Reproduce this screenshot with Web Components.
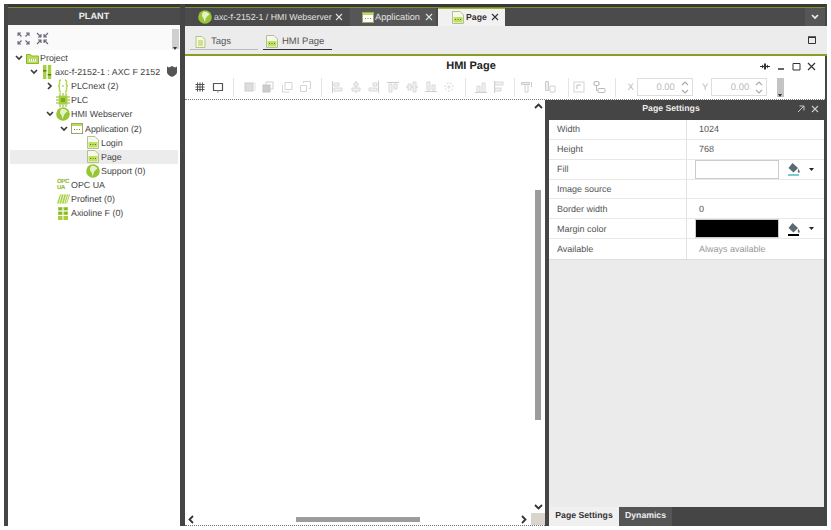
<!DOCTYPE html>
<html>
<head>
<meta charset="utf-8">
<style>
  html, body { margin: 0; height: 100%; background: #fff; }
  body { padding: 4px 4px 4px 4px; box-sizing: border-box; height: 530px; overflow: hidden; font-family: "Liberation Sans", Arial, sans-serif; text-rendering: geometricPrecision; }
</style>
</head>
<body>
<hmi-app>
  <plant-panel slot="plant">
    <tree-row indent="4" toggle="open" icon="project" label="Project"></tree-row>
    <tree-row indent="19" toggle="open" icon="device" label="axc-f-2152-1 : AXC F 2152" shield></tree-row>
    <tree-row indent="35" toggle="closed" icon="braces" label="PLCnext (2)"></tree-row>
    <tree-row indent="35" icon="chip" label="PLC"></tree-row>
    <tree-row indent="35" toggle="open" icon="globe" label="HMI Webserver"></tree-row>
    <tree-row indent="49" toggle="open" icon="app" label="Application (2)"></tree-row>
    <tree-row indent="65" icon="page" label="Login"></tree-row>
    <tree-row indent="65" icon="page" label="Page" selected></tree-row>
    <tree-row indent="65" icon="globe" label="Support (0)"></tree-row>
    <tree-row indent="35" icon="opc" label="OPC UA"></tree-row>
    <tree-row indent="35" icon="profinet" label="Profinet (0)"></tree-row>
    <tree-row indent="35" icon="axio" label="Axioline F (0)"></tree-row>
  </plant-panel>
  <editor-area slot="editor">
    <settings-dock>
      <setting-row label="Width" value="1024"></setting-row>
      <setting-row label="Height" value="768"></setting-row>
      <setting-row label="Fill" swatch="#ffffff"></setting-row>
      <setting-row label="Image source"></setting-row>
      <setting-row label="Border width" value="0"></setting-row>
      <setting-row label="Margin color" swatch="#000000"></setting-row>
      <setting-row label="Available" value="Always available" muted></setting-row>
    </settings-dock>
  </editor-area>
</hmi-app>

<script>
  const ICONS = {
    project: `<svg width="13" height="11" viewBox="0 0 13 11"><path d="M0.5 1.5h4l1 1.5h7v7.5h-12z" fill="#b7dc55" stroke="#8fb62e"/><path d="M3 6h7v2.5H3z" fill="#fff"/><path d="M4 7h1M6 7h1M8 7h1" stroke="#6d8f1e"/></svg>`,
    device: `<svg width="10" height="14" viewBox="0 0 10 14"><rect x="1" y="0" width="3.4" height="14" fill="#a5cf3c"/><rect x="5.8" y="0" width="3.4" height="14" fill="#a5cf3c"/><rect x="1" y="5" width="3.4" height="1.5" fill="#5d7a18"/><rect x="5.8" y="9" width="3.4" height="1.5" fill="#5d7a18"/></svg>`,
    braces: `<svg width="12" height="14" viewBox="0 0 12 14" fill="none" stroke="#b5d84f" stroke-width="1.5"><path d="M4 1C2 1 2.5 3 2.5 5S1 7 1 7s1.500 0 1.500 2-.5 4 1.500 4M8 1c2 0 1.500 2 1.500 4S11 7 11 7s-1.500 0-1.500 2 .5 4-1.500 4"/><path d="M5.500 7h1" stroke="#7f9c2a"/></svg>`,
    chip: `<svg width="14" height="14" viewBox="0 0 14 14"><rect x="2.500" y="2.500" width="9" height="9" fill="#a5cf3c"/><rect x="5" y="5" width="4" height="4" fill="#7fa526"/><path d="M0 4h2.500M11.500 4H14M0 7h2.500M11.500 7H14M0 10h2.500M11.500 10H14M4 0v2.500M4 11.500V14M7 0v2.500M7 11.500V14M10 0v2.500M10 11.500V14" stroke="#8db52e"/></svg>`,
    globe: `<svg width="14" height="14" viewBox="0 0 14 14"><circle cx="7" cy="7" r="6.800" fill="#96c535"/><path d="M5 2C8 1 11 3 11.500 5 9.500 5 9 7 8 8 7.500 9 7.500 11 6.500 12 6 10 6 8 4.500 7 3.500 6 4 4 5 2z" fill="#e6f1c6"/></svg>`,
    app: `<svg width="12" height="11" viewBox="0 0 12 11"><rect x="0.500" y="0.500" width="11" height="10" fill="#fff" stroke="#9aa86a"/><rect x="1" y="1" width="10" height="2" fill="#b7dc55"/><path d="M3 6.500h1M5.500 6.500h1M8 6.500h1" stroke="#6d8f1e"/></svg>`,
    page: `<svg width="12" height="13" viewBox="0 0 12 13"><path d="M.5 .5h7.500l3.500 3.500v8.500H.5z" fill="#f6f8ea" stroke="#b4bf95"/><rect x="1.500" y="6" width="9" height="5.500" fill="#bfe060"/><path d="M3 8.500h1M5.500 8.500h1M8 8.500h1" stroke="#5d7a18"/></svg>`,
    profinet: `<svg width="13" height="10" viewBox="0 0 13 10"><path d="M3 .5h10L10 9.500H0z" fill="#a5cf3c"/><path d="M4.500 .5 2 9.500M7 .5 4.500 9.500M9.500 .5 7 9.500M11.500 .5 9 9.500" stroke="#fff" stroke-width=".8"/></svg>`,
    axio: `<svg width="12" height="13" viewBox="0 0 12 13"><path d="M1 0h4.500v13H1zM6.500 0H11v13H6.500z" fill="#a5cf3c"/><path d="M1 4h10M1 8.500h10" stroke="#fff"/><path d="M2 2h2.500M7.500 2H10M2 6h2.500M7.500 6H10" stroke="#6d8f1e"/></svg>`
  };

  const TOOL_PATHS = {
    grid: `<path d="M4.500 2.500v9M7 2.500v9M9.500 2.500v9M2.500 4.500h9M2.500 7h9M2.500 9.500h9" stroke="#555"/>`,
    frame: `<path d="M2.500 3.500h9v7h-9z" stroke="#555" stroke-width="1.200"/><path d="M7 10.500V13" stroke="#999"/>`,
    front: `<rect x="3" y="3" width="8" height="8" fill="#ddd" stroke="#ccc"/><path d="M11 3h2v8" stroke="#e3e3e3"/>`,
    back: `<rect x="2" y="5" width="7" height="7" fill="#ccc" stroke="#c4c4c4"/><path d="M5 5V2h7v7H9" stroke="#d0d0d0"/>`,
    fwd: `<path d="M5 2.500h7v7H5z" stroke="#d4d4d4"/><path d="M2.500 5v7h7" stroke="#d4d4d4"/>`,
    bwd: `<path d="M2.500 5.500h6v6h-6z" stroke="#d4d4d4"/><path d="M5.500 3V1.500h7v7H11" stroke="#d4d4d4"/>`,
    alignL: `<path d="M2.500 1v12" stroke="#ccc"/><path d="M4 3h5v3H4zM4 8h8v3H4z" fill="#f2f2f2" stroke="#d8d8d8"/>`,
    alignC: `<path d="M7 1v12" stroke="#ccc"/><path d="M5 3h4v3H5zM3 8h8v3H3z" fill="#f2f2f2" stroke="#d8d8d8"/>`,
    alignR: `<path d="M11.500 1v12" stroke="#ccc"/><path d="M6 3h4v3H6zM2 8h8v3H2z" fill="#f2f2f2" stroke="#d8d8d8"/>`,
    alignT: `<path d="M1 2.500h12" stroke="#ccc"/><path d="M3 4h3v8H3zM8 4h3v5H8z" fill="#f2f2f2" stroke="#d8d8d8"/>`,
    alignM: `<path d="M1 7h12" stroke="#ccc"/><path d="M3 4h3v6H3zM8 2h3v10H8z" fill="#f2f2f2" stroke="#d8d8d8"/>`,
    alignB: `<path d="M1 11.500h12" stroke="#ccc"/><path d="M3 2h3v8H3zM8 5h3v5H8z" fill="#f2f2f2" stroke="#d8d8d8"/>`,
    ring: `<path d="M3 7a4 4 0 0 1 8 0 4 4 0 0 1-8 0" stroke="#d4d4d4" stroke-dasharray="2 1.500"/><path d="M7 5v4M5 7h4" stroke="#ddd"/>`,
    distH: `<path d="M1 12.500h12" stroke="#ccc"/><path d="M3 6h3v6H3zM8 3h3v9H8z" fill="#f2f2f2" stroke="#d8d8d8"/>`,
    distV: `<path d="M2.500 1v12" stroke="#ccc"/><path d="M3 2h8v3H3zM3 8h6v3H3z" fill="#f2f2f2" stroke="#d8d8d8"/>`,
    sizeW: `<path d="M1.500 2.500h8v2h-8z" fill="#eee" stroke="#ccc"/><path d="M5 5v7h3V5" stroke="#d0d0d0"/><path d="M11.500 2v5" stroke="#ccc"/>`,
    sizeH: `<path d="M2.500 1.500h3v9h-3z" fill="#eee" stroke="#ccc"/><path d="M7 6h5v6H7z" stroke="#d0d0d0"/>`,
    corner: `<rect x="2" y="2" width="10" height="10" stroke="#d4d4d4"/><path d="M5 9V5h4" stroke="#bbb"/>`,
    link: `<rect x="2" y="1.500" width="5" height="4" rx="1.500" stroke="#aaa"/><rect x="6" y="8.500" width="7" height="4" rx="1" stroke="#bbb"/><path d="M4.500 5.500v5H6" stroke="#bbb"/>`
  };

  class HmiApp extends HTMLElement {
    constructor() {
      super();
      this.attachShadow({ mode: 'open' });
      this.shadowRoot.innerHTML = `
        <style>
          :host { display: grid; grid-template-columns: 172px 1fr; column-gap: 5px; width: 823px; height: 522px; padding-left: 4px; box-sizing: border-box; background: #454545; }
        </style>
        <slot name="plant"></slot>
        <slot name="editor"></slot>`;
    }
  }
  customElements.define('hmi-app', HmiApp);

  class PlantPanel extends HTMLElement {
    constructor() {
      super();
      this.attachShadow({ mode: 'open' });
      this.shadowRoot.innerHTML = `
        <style>
          :host { display: flex; flex-direction: column; background: #fff; min-height: 0; }
          .head { height: 21px; box-sizing: border-box; border-top: 3px solid #383838; background: #4b4b4b; color: #eee; font-size: 9.200px; font-weight: bold; text-align: center; line-height: 18px; box-shadow: inset 0 1px 0 #7f8f2a; }
          .tools { height: 25px; box-sizing: border-box; padding: 2px 0 0 9px; flex: none; display: flex; align-items: center; gap: 6px; background: #fafafa; }
          .bar { margin-left: auto; width: 7px; height: 20px; background: #cfcfcf; margin-right: 1px; position: relative; }
          .bar::after { content: ""; position: absolute; left: 1px; bottom: -1px; border: 2.500px solid transparent; border-top: 3px solid #333; border-bottom: 0; }
          .tree { padding: 1px 2px 0 2px; display: flex; flex-direction: column; }
        </style>
        <div class="head">PLANT</div>
        <div class="tools">
          <svg width="13" height="13" viewBox="0 0 13 13" fill="none" stroke="#667" stroke-width="1.100"><path d="M1 4V1h3M12 4V1H9M1 9v3h3M12 9v3H9M1.500 1.500l3 3M11.500 1.500l-3 3M1.500 11.500l3-3M11.500 11.500l-3-3"/></svg>
          <svg width="13" height="13" viewBox="0 0 13 13" fill="none" stroke="#667" stroke-width="1.100"><path d="M5 2v3H2M8 2v3h3M5 11V8H2M8 11V8h3M1 1l4 4M12 1 8 5M1 12l4-4M12 12 8 8"/></svg>
          <div class="bar"></div>
        </div>
        <div class="tree"><slot></slot></div>`;
    }
  }
  customElements.define('plant-panel', PlantPanel);

  class TreeRow extends HTMLElement {
    constructor() {
      super();
      this.attachShadow({ mode: 'open' });
    }
    connectedCallback() {
      const toggle = this.getAttribute('toggle');
      const icon = this.getAttribute('icon');
      const chevron = toggle === 'open'
        ? `<svg width="8" height="6" viewBox="0 0 8 6"><path d="M1 1l3 3 3-3" fill="none" stroke="#3c3c3c" stroke-width="1.700"/></svg>`
        : toggle === 'closed'
          ? `<svg width="6" height="8" viewBox="0 0 6 8"><path d="M1 1l3 3-3 3" fill="none" stroke="#3c3c3c" stroke-width="1.700"/></svg>`
          : '';
      const iconMarkup = icon === 'opc' ? `<span class="opc">OPC<br>UA</span>` : ICONS[icon];
      const shield = this.hasAttribute('shield')
        ? `<svg class="shield" width="10" height="12" viewBox="0 0 10 12"><path d="M0 1.500 2 2.500 5 1l3 1.500 2-1V7c0 2.500-3 4-5 5-2-1-5-2.500-5-5z" fill="#555"/></svg>`
        : '';
      this.shadowRoot.innerHTML = `
        <style>
          :host { display: flex; align-items: center; height: 14.1px; font-size: 8.900px; color: #444; white-space: nowrap; position: relative; }
          :host([selected]) { background: #ececec; }
          .tog { width: 10px; display: flex; justify-content: center; flex: none; }
          .ico { width: 16px; display: flex; justify-content: center; align-items: center; flex: none; height: 14px; }
          .ico svg { flex: none; }
          .opc { color: #8ab42a; font-size: 6px; font-weight: bold; line-height: 6px; letter-spacing: -.3px; text-align: left; }
          .shield { position: absolute; left: 157px; top: 0; }
        </style>
        <span class="tog" style="margin-left:${this.getAttribute('indent')}px">${chevron}</span>
        <span class="ico">${iconMarkup}</span>
        <span>${this.getAttribute('label')}</span>${shield}`;
    }
  }
  customElements.define('tree-row', TreeRow);

  class DocTab extends HTMLElement {
    constructor() {
      super();
      this.attachShadow({ mode: 'open' });
    }
    connectedCallback() {
      this.shadowRoot.innerHTML = `
        <style>
          :host { display: flex; align-items: center; box-sizing: border-box; height: 18px; font-size: 9.200px; color: #e2e2e2; gap: 1px; white-space: nowrap; background: #4f4f4f; }
          :host([long]) { font-size: 8.800px; gap: 2px; }
          :host([active]) { background: #f1f1f1; color: #333; font-weight: bold; box-shadow: inset 0 1px 0 #9ab52f; font-size: 8.700px; gap: 2px; }
          .x { margin-left: auto; width: 8px; height: 8px; }
          svg { flex: none; }
        </style>
        <slot></slot>
        <svg class="x" viewBox="0 0 8 8"><path d="M1 1l6 6M7 1 1 7" stroke="currentColor" stroke-width="1.100"/></svg>`;
    }
  }
  customElements.define('doc-tab', DocTab);

  class SubTab extends HTMLElement {
    constructor() {
      super();
      this.attachShadow({ mode: 'open' });
      this.shadowRoot.innerHTML = `
        <style>
          :host { display: flex; align-items: center; gap: 5px; box-sizing: border-box; height: 24px; padding: 9px 0 1px 5px; border-bottom: 1px solid #bbb; font-size: 9.500px; color: #555; }
          :host([active]) { border-bottom-color: #333; gap: 4px; padding-left: 3px; }
        </style>
        <slot></slot>`;
    }
  }
  customElements.define('sub-tab', SubTab);

  class ToolStrip extends HTMLElement {
    constructor() {
      super();
      this.attachShadow({ mode: 'open' });
    }
    connectedCallback() {
      // names, slot width, pull towards the previous separator
      const groups = [
        [['grid', 'frame'], 18, 0],
        [['front', 'back', 'fwd', 'bwd'], 18.7, 0],
        [['alignL', 'alignC', 'alignR', 'alignT', 'alignM', 'alignB', 'ring'], 18.7, 0],
        [['distH', 'distV'], 18, 0],
        [['sizeW', 'sizeH'], 23, -5],
        [['corner', 'link'], 20, -6]
      ];
      const html = groups.map(([names, w, pull]) => {
        const icons = names.map((n, i) => `<span class="t" style="width:${w}px;margin-left:${i ? 0 : pull}px"><svg width="14" height="14" viewBox="0 0 14 14" fill="none">${TOOL_PATHS[n]}</svg></span>`).join('');
        return icons + `<i class="sep"></i>`;
      }).join('');
      const spin = `<svg width="8" height="15" viewBox="0 0 8 15" fill="none" stroke="#aaa" stroke-width="1.200"><path d="M1 5l3-3 3 3M1 10l3 3 3-3"/></svg>`;
      this.shadowRoot.innerHTML = `
        <style>
          :host { display: flex; align-items: center; height: 25px; box-sizing: border-box; padding-left: 6px; background: #fff; font-size: 9.500px; color: #bbb; border-bottom: 1px dotted #777; }
          .t { display: flex; justify-content: center; flex: none; }
          .sep { width: 1px; height: 19px; background: #e4e4e4; margin: 0 6px; flex: none; }
          .lab { margin: 0 3px 0 9px; }
          .lab.first { margin-left: 6px; }
          .num { width: 56px; height: 18px; box-sizing: border-box; border: 1px solid #ddd; display: flex; align-items: center; justify-content: flex-end; gap: 6px; padding-right: 3px; color: #bbb; }
          .bar { width: 7px; height: 19px; background: #c4c4c4; margin-left: 10px; position: relative; }
          .bar::after { content: ""; position: absolute; left: 1px; bottom: 0; border: 2.500px solid transparent; border-top: 3px solid #333; border-bottom: 0; }
        </style>
        ${html}
        <span class="lab first">X</span><span class="num">0.00 ${spin}</span>
        <span class="lab">Y</span><span class="num">0.00 ${spin}</span>
        <span class="bar"></span>`;
    }
  }
  customElements.define('tool-strip', ToolStrip);

  class EditorArea extends HTMLElement {
    constructor() {
      super();
      this.attachShadow({ mode: 'open' });
      const webIcon = ICONS.globe, appIcon = ICONS.app, pageIcon = ICONS.page;
      this.shadowRoot.innerHTML = `
        <style>
          :host { display: flex; flex-direction: column; min-height: 0; padding-right: 2px; background: #454545; }
          .tabs { height: 22px; flex: none; box-sizing: border-box; border-top: 3px solid #383838; background: #4b4b4b; display: flex; gap: 2px; box-shadow: inset 0 1px 0 #7f8f2a; padding-top: 1px; }
          .tabs doc-tab:nth-child(1) { width: 163px; background: #4b4b4b; padding: 0 5px 0 13px; }
          .tabs doc-tab:nth-child(2) { width: 86px; background: #565656; padding: 0 3px 0 12px; }
          .tabs doc-tab:nth-child(3) { width: 67px; padding: 0 6px 0 14px; }
          .more { margin-left: auto; width: 20px; background: #565656; display: flex; align-items: center; justify-content: center; }
          .subs { height: 30px; flex: none; box-sizing: border-box; background: #ececec; border-bottom: 2px solid #8c9c28; display: flex; padding-left: 5px; gap: 5px; margin-right: -2px; position: relative; }
          .subs sub-tab:nth-child(1) { width: 68px; }
          .subs sub-tab:nth-child(2) { width: 69px; }
          .max { position: absolute; right: 11px; top: 10px; }
          .title { height: 19px; flex: none; background: #fff; position: relative; display: flex; align-items: center; justify-content: center; font-size: 11px; font-weight: bold; color: #222; padding-right: 68px; }
          .win { position: absolute; right: 9px; top: 6px; display: flex; gap: 6px; }
          .body { flex: 1; min-height: 0; display: flex; background: #fff; }
          .canvas { width: 360px; flex: none; display: grid; grid-template-columns: 1fr 14px; grid-template-rows: 1fr 12px; background: #fff; border-bottom: 1px dotted #777; box-sizing: border-box; }
          .page { background: #fff; }
          .vs { display: flex; flex-direction: column; align-items: center; justify-content: space-between; padding: 3px 0 3px; position: relative; }
          .vs .thumb { position: absolute; left: 4px; top: 90px; width: 6px; height: 230px; background: #9c9c9c; }
          .hs { display: flex; align-items: center; position: relative; justify-content: space-between; padding: 0 4px 0 3px; }
          .hs .thumb { position: absolute; left: 111px; top: 4px; height: 5px; width: 124px; background: #9c9c9c; }
          .corner { background: #d9d5cd; }
        </style>
        <div class="tabs">
          <doc-tab long>${webIcon}axc-f-2152-1 / HMI Webserver</doc-tab>
          <doc-tab>${appIcon}Application</doc-tab>
          <doc-tab active>${pageIcon}Page</doc-tab>
          <span class="more"><svg width="8" height="6" viewBox="0 0 8 6"><path d="M1 1l3 3 3-3" fill="none" stroke="#eee" stroke-width="1.700"/></svg></span>
        </div>
        <div class="subs">
          <sub-tab><svg width="11" height="12" viewBox="0 0 11 12"><path d="M1 .5h6l3 3v8H1z" fill="#f6f8e8" stroke="#b5c478"/><path d="M3 5h5M3 7h5M3 9h5" stroke="#a5cf3c"/></svg>Tags</sub-tab>
          <sub-tab active>${pageIcon}HMI Page</sub-tab>
          <svg class="max" width="8" height="8" viewBox="0 0 8 8"><path d="M.5 1.500h7v6h-7z" fill="none" stroke="#333"/><path d="M0 1h8" stroke="#333" stroke-width="1.500"/></svg>
        </div>
        <div class="title"><span>HMI Page</span>
          <span class="win">
            <svg width="10" height="9" viewBox="0 0 10 9"><path d="M0 4.500h4M6 4.500h4M4.500 1.500v6M5.500 1.500v6" stroke="#333"/><path d="M2 2.500l2 2-2 2zM8 2.500l-2 2 2 2z" fill="#333"/></svg>
            <svg width="10" height="9" viewBox="0 0 10 9"><path d="M2 7h6" stroke="#333" stroke-width="1.500"/></svg>
            <svg width="9" height="9" viewBox="0 0 9 9"><path d="M1 1.500h7v6.500H1z" fill="none" stroke="#333"/></svg>
            <svg width="9" height="9" viewBox="0 0 9 9"><path d="M1 1l7 7M8 1 1 8" stroke="#333" stroke-width="1.200"/></svg>
          </span>
        </div>
        <tool-strip></tool-strip>
        <div class="body">
          <div class="canvas">
            <div class="page"></div>
            <div class="vs">
              <svg width="9" height="6" viewBox="0 0 9 6"><path d="M1 5l3.500-3.500L8 5" fill="none" stroke="#333" stroke-width="1.800"/></svg>
              <span class="thumb"></span>
              <svg width="9" height="6" viewBox="0 0 9 6"><path d="M1 1l3.500 3.500L8 1" fill="none" stroke="#333" stroke-width="1.800"/></svg>
            </div>
            <div class="hs">
              <svg width="6" height="9" viewBox="0 0 6 9"><path d="M5 1 1.500 4.500 5 8" fill="none" stroke="#333" stroke-width="1.800"/></svg>
              <span class="thumb"></span>
              <svg width="6" height="9" viewBox="0 0 6 9"><path d="M1 1l3.500 3.500L1 8" fill="none" stroke="#333" stroke-width="1.800"/></svg>
            </div>
            <div class="corner"></div>
          </div>
          <slot></slot>
        </div>`;
    }
  }
  customElements.define('editor-area', EditorArea);

  class SettingsDock extends HTMLElement {
    constructor() {
      super();
      this.attachShadow({ mode: 'open' });
      this.shadowRoot.innerHTML = `
        <style>
          :host { flex: 1; min-width: 0; display: flex; flex-direction: column; background: #454545; padding-left: 4px; box-sizing: border-box; }
          .head { height: 20px; box-sizing: border-box; flex: none; margin-left: -4px; position: relative; display: flex; align-items: center; justify-content: center; color: #eee; font-size: 8.700px; font-weight: bold; padding: 0 28px 4px 0; }
          .ico { position: absolute; right: 6px; top: 5px; display: flex; gap: 6px; }
          .sheet { flex: 1; min-height: 0; background: #ebebeb; margin-right: 1px; }
          .rows { background: #fff; border-bottom: 1px solid #ddd; }
          .foot { height: 19px; flex: none; display: flex; font-size: 8.700px; font-weight: bold; }
          .foot span { display: flex; align-items: center; justify-content: center; padding-bottom: 3px; box-sizing: border-box; }
          .foot .on { width: 70px; background: #f0f0f0; color: #333; }
          .foot .off { width: 53px; background: #555; color: #eee; }
        </style>
        <div class="head">Page Settings
          <span class="ico">
            <svg width="8" height="8" viewBox="0 0 8 8" fill="none" stroke="#ccc"><path d="M1 7l6-6M2.500 1H7v4.500"/></svg>
            <svg width="8" height="8" viewBox="0 0 8 8"><path d="M1 1l6 6M7 1 1 7" stroke="#ccc" stroke-width="1.100"/></svg>
          </span>
        </div>
        <div class="sheet"><div class="rows"><slot></slot></div></div>
        <div class="foot"><span class="on">Page Settings</span><span class="off">Dynamics</span></div>`;
    }
  }
  customElements.define('settings-dock', SettingsDock);

  class SettingRow extends HTMLElement {
    constructor() {
      super();
      this.attachShadow({ mode: 'open' });
    }
    connectedCallback() {
      const swatch = this.getAttribute('swatch');
      const dark = swatch === '#000000';
      const right = swatch
        ? `<span class="sw" style="background:${swatch}"></span>
           <svg class="pail" width="14" height="14" viewBox="0 0 14 14"><path d="M5.500 1 11 6l-4.500 4.500L1.500 6z" fill="#5a6a70"/><path d="M11 6.500c1 1.500 1.800 2.500 1.800 3.200a1 1 0 0 1-2 0c0-.7.200-1.700.2-3.200z" fill="#5a6a70"/><path d="M1 13h11" stroke="${dark ? '#000' : '#7cc'}" stroke-width="2"/></svg>
           <svg class="caret" width="5" height="3" viewBox="0 0 5 3"><path d="M0 0h5L2.500 3z" fill="#222"/></svg>`
        : `<span class="val">${this.getAttribute('value') || ''}</span>`;
      this.shadowRoot.innerHTML = `
        <style>
          :host { display: grid; grid-template-columns: 138px 1fr; height: 19.850px; box-sizing: border-box; border-bottom: 1px solid #e8e8e8; font-size: 9px; color: #555; align-items: stretch; }
          :host(:last-child) { border-bottom: 0; }
          .lab { display: flex; align-items: center; padding-left: 8px; border-right: 1px solid #e2e2e2; }
          .r { display: flex; align-items: center; padding-left: 8px; }
          .val { color: ${this.hasAttribute('muted') ? '#999' : '#555'}; padding-left: 4px; }
          .sw { width: 84px; height: 19px; box-sizing: border-box; border: 1px solid #ccc; flex: none; }
          .pail { margin-left: 8px; flex: none; }
          .caret { margin-left: 8px; flex: none; }
        </style>
        <span class="lab">${this.getAttribute('label')}</span>
        <span class="r">${right}</span>`;
    }
  }
  customElements.define('setting-row', SettingRow);
</script>
</body>
</html>
